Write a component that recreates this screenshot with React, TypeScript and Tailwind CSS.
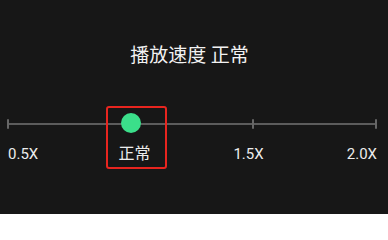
import React from "react";

export default function App() {
  return (
    <div className="relative w-[388px] h-[214px] bg-[#171717] flex flex-col overflow-hidden">
      <div className="pt-[43px] flex justify-center pr-[9px]">
        <span className="text-[19px] leading-[26px] text-[#f2f2f2] [font-family:Roboto,'Noto_Sans_CJK_SC',sans-serif]">
          播放速度 正常
        </span>
      </div>

      <div className="relative mt-[45px] h-[20px] ml-[7px] w-[370px] flex items-center">
        <div className="absolute left-0 right-0 top-[9px] h-[2px] bg-[#5c5c5c]" />
        <div className="relative w-full flex justify-between items-center">
          <div className="w-[2px] h-[10px] bg-[#666] rounded-[1px]" />
          <div className="w-[2px] h-[10px] bg-[#666] rounded-[1px]" />
          <div className="w-[2px] h-[10px] bg-[#666] rounded-[1px]" />
          <div className="w-[2px] h-[10px] bg-[#666] rounded-[1px]" />
        </div>
        <div className="absolute left-[114px] top-[-1px] w-[20px] h-[20px] rounded-full bg-[#3bdf8a]" />
      </div>

      <div className="mt-[10px] flex items-baseline pl-[8px] text-[#ececec] [font-family:Roboto,'Noto_Sans_CJK_SC',sans-serif] leading-[20px]">
        <div className="w-[86px] text-left text-[15px]">0.5X</div>
        <div className="w-[81px] text-center text-[16px]">正常</div>
        <div className="w-[147px] text-center text-[15px]">1.5X</div>
        <div className="w-[55px] text-right text-[15px]">2.0X</div>
      </div>

      <div className="absolute left-[106px] top-[106px] w-[61px] h-[63px] border-2 border-[#e8251f] rounded-[3px]" />
    </div>
  );
}
